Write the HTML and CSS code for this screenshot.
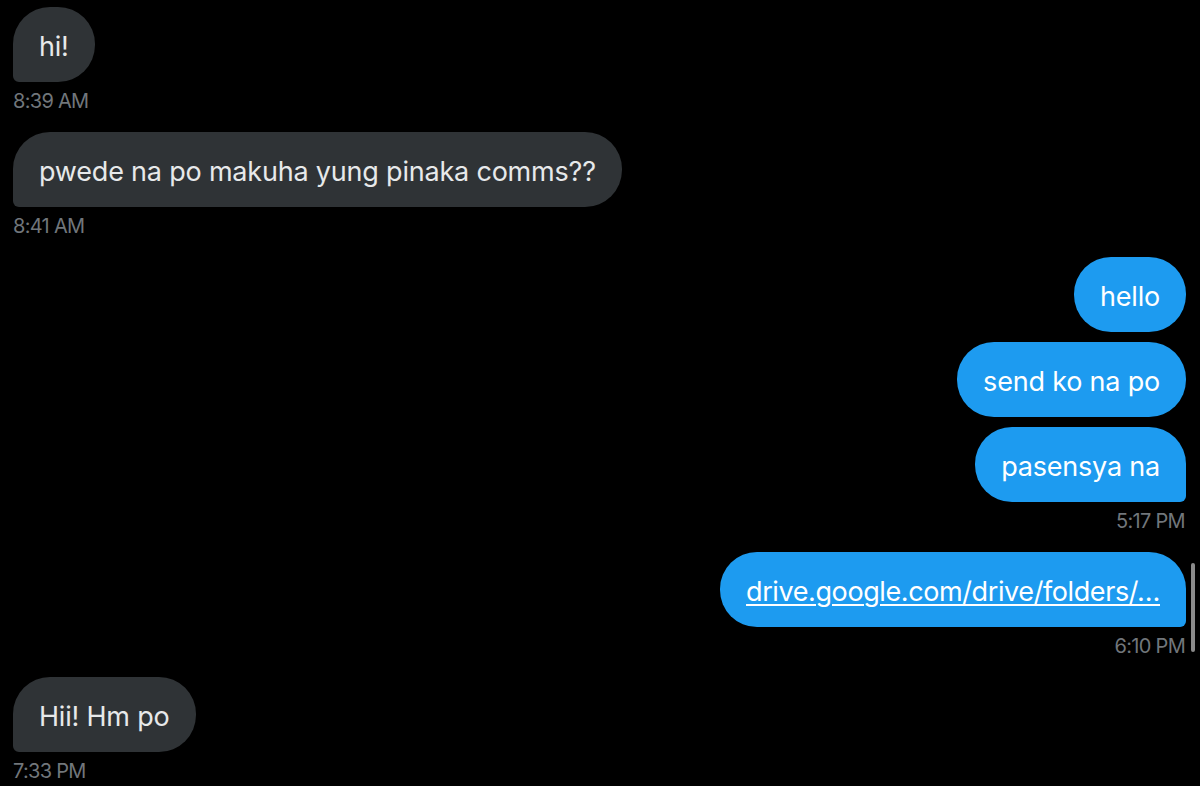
FILE: index.html
```html
<!DOCTYPE html>
<html lang="tl">
<head>
<meta charset="utf-8">
<title>Messages</title>
<link rel="stylesheet" href="styles.css">
</head>
<body>
<main class="thread">
  <div class="group in">
    <div class="bubble tail">hi!</div>
    <div class="time">8:39 AM</div>
  </div>
  <div class="group in">
    <div class="bubble tail">pwede na po makuha yung pinaka comms??</div>
    <div class="time">8:41 AM</div>
  </div>
  <div class="group out">
    <div class="bubble">hello</div>
    <div class="bubble">send ko na po</div>
    <div class="bubble tail">pasensya na</div>
    <div class="time">5:17 PM</div>
  </div>
  <div class="group out">
    <div class="bubble tail"><a class="link" href="#">drive.google.com/drive/folders/…</a></div>
    <div class="time">6:10 PM</div>
  </div>
  <div class="group in">
    <div class="bubble tail">Hii! Hm po</div>
    <div class="time">7:33 PM</div>
  </div>
</main>
<div class="scroll-thumb"></div>
</body>
</html>
```

FILE: styles.css
```css
* { box-sizing: border-box; }

html, body {
  margin: 0;
  height: 100%;
  background: #000;
  overflow: hidden;
}

body {
  font-family: Inter, "Liberation Sans", sans-serif;
}

.thread {
  display: flex;
  flex-direction: column;
  padding: 7px 14px 0 13px;
  gap: 19px;
}

.group {
  display: flex;
  flex-direction: column;
  gap: 10px;
}

.group.in { align-items: flex-start; }
.group.out { align-items: flex-end; }

.bubble {
  height: 75px;
  padding: 23px 26px 19px;
  font-size: 27px;
  line-height: 33px;
  letter-spacing: -0.2px;
  border-radius: 37px;
  white-space: nowrap;
}

.in .bubble {
  background: #2f3336;
  color: #e7e9ea;
}

.out .bubble {
  background: #1d9bf0;
  color: #fff;
}

.in .bubble.tail { border-bottom-left-radius: 6px; }
.out .bubble.tail { border-bottom-right-radius: 6px; }

.link {
  color: #fff;
  letter-spacing: -0.4px;
  text-decoration: underline;
  text-decoration-thickness: 1.5px;
  text-underline-offset: 3px;
}

.time {
  margin-top: -3px;
  font-size: 20px;
  line-height: 24px;
  letter-spacing: -0.7px;
  color: #71767b;
}

.out .time { margin-right: 1px; }

.scroll-thumb {
  position: fixed;
  left: 1191px;
  top: 563px;
  width: 4px;
  height: 89px;
  border-radius: 2px;
  background: #8a8a8a;
}
```
